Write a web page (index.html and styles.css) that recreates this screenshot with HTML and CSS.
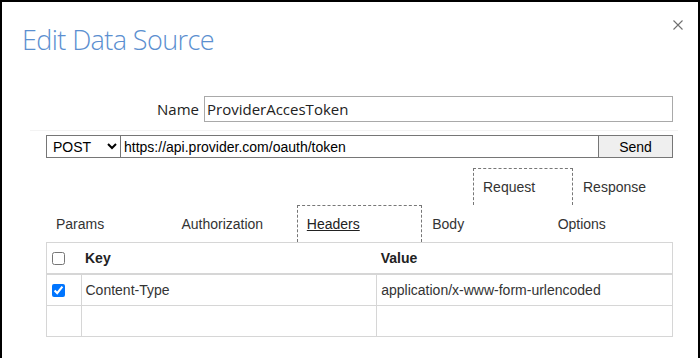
FILE: index.html
```html
<!DOCTYPE html>
<html lang="en">
<head>
    <meta charset="UTF-8">
    <title>Edit Data Source</title>
    <link rel="stylesheet" href="styles.css">
</head>
<body>
    <div class="dialog">
        <div class="dialog-head">
            <h1>Edit Data Source</h1>
            <button class="close" title="Close">
                <svg width="10" height="10" viewBox="0 0 10 10"><path d="M0.5 0.5 L9.5 9.5 M9.5 0.5 L0.5 9.5" stroke="#6f6f6f" stroke-width="1.1" fill="none"/></svg>
            </button>
        </div>
        <div class="content">
            <div class="name-row">
                <label for="name">Name</label>
                <input id="name" type="text" value="ProviderAccesToken">
            </div>
            <div class="sep"></div>
            <div class="request-row">
                <select class="method">
                    <option>POST</option>
                    <option>GET</option>
                    <option>PUT</option>
                    <option>DELETE</option>
                </select>
                <input class="url" type="text" value="https://api.provider.com/oauth/token">
                <button class="send">Send</button>
            </div>
            <div class="tabs tabs-top">
                <div class="tab active">Request</div>
                <div class="tab">Response</div>
            </div>
            <div class="tabs tabs-main">
                <div class="tab">Params</div>
                <div class="tab">Authorization</div>
                <div class="tab active"><u>Headers</u></div>
                <div class="tab">Body</div>
                <div class="tab">Options</div>
            </div>
            <table class="grid">
                <thead>
                    <tr>
                        <th class="check"><input type="checkbox"></th>
                        <th>Key</th>
                        <th>Value</th>
                    </tr>
                </thead>
                <tbody>
                    <tr>
                        <td class="check"><input type="checkbox" checked></td>
                        <td>Content-Type</td>
                        <td>application/x-www-form-urlencoded</td>
                    </tr>
                    <tr>
                        <td class="check"></td>
                        <td></td>
                        <td></td>
                    </tr>
                </tbody>
            </table>
        </div>
    </div>
</body>
</html>
```

FILE: styles.css
```css
body {
    margin: 0;
    font-family: "Liberation Sans", Arial, sans-serif;
    font-size: 14px;
    color: #333;
    background: #fff;
}
.dialog {
    box-sizing: border-box;
    height: 358px;
    border: 2px solid #000;
    border-bottom: none;
    background: #fff;
    overflow: hidden;
}
.dialog-head {
    display: flex;
    justify-content: space-between;
    align-items: flex-start;
    padding: 18px 15px 0 20px;
}
.dialog-head h1 {
    margin: 1px 0 0;
    font-family: "Open Sans", sans-serif;
    font-weight: 300;
    font-size: 27px;
    letter-spacing: -0.6px;
    line-height: 38px;
    color: #5b8fd0;
}
.close {
    border: none;
    background: none;
    padding: 0;
    width: 10px;
    height: 10px;
    cursor: pointer;
}
.close svg {
    display: block;
}
.content {
    padding: 0 25px 0 44px;
}
.name-row {
    display: flex;
    align-items: center;
    margin-top: 37px;
}
.name-row label {
    flex: 1;
    text-align: right;
    padding-right: 5px;
    font-family: "Open Sans", sans-serif;
    font-size: 15px;
    color: #222;
}
.name-row input {
    box-sizing: border-box;
    width: 469px;
    height: 26px;
    border: 1px solid #a9a9a9;
    padding: 0 2px;
    font-family: "Open Sans", sans-serif;
    font-size: 15px;
    color: #222;
    outline: none;
}
.sep {
    margin: 8px -5px 0 -16px;
    border-top: 1px solid #f3f3f3;
}
.request-row {
    display: flex;
    height: 23px;
    margin-top: 4px;
}
.request-row .method {
    box-sizing: border-box;
    width: 75px;
    height: 23px;
    border: 1px solid #767676;
    border-radius: 0;
    padding: 0 0 0 2px;
    font-family: "Liberation Sans", Arial, sans-serif;
    font-size: 14px;
    color: #000;
    background: #fff;
}
.request-row .url {
    box-sizing: border-box;
    flex: 1;
    height: 23px;
    margin-left: -1px;
    border: 1px solid #767676;
    padding: 0 3px;
    font-family: "Liberation Sans", Arial, sans-serif;
    font-size: 14px;
    color: #000;
    outline: none;
}
.request-row .send {
    box-sizing: border-box;
    width: 75px;
    height: 23px;
    margin-left: -1px;
    border: 1px solid #767676;
    border-radius: 0;
    background: #efefef;
    font-family: "Liberation Sans", Arial, sans-serif;
    font-size: 14px;
    color: #000;
}
.tabs {
    display: flex;
}
.tabs-top {
    justify-content: flex-end;
    margin-top: 10px;
}
.tab {
    box-sizing: border-box;
    height: 37px;
    border: 1px dashed transparent;
    border-bottom: none;
    padding-left: 9px;
    line-height: 36px;
    color: #333;
}
.tabs-top .tab {
    width: 100px;
}
.tabs-main .tab {
    flex: 1;
}
.tab.active {
    border-color: #777;
}
.tab u {
    color: #222;
}
.grid {
    width: 100%;
    border-collapse: collapse;
    border: 1px solid #d6d6d6;
    table-layout: fixed;
}
.grid th,
.grid td {
    height: 30px;
    padding: 0 4px;
    text-align: left;
    vertical-align: middle;
}
.grid th {
    font-weight: bold;
    color: #222;
    border-bottom: 2px solid #d6d6d6;
}
.grid td {
    border: 1px solid #d6d6d6;
}
.grid .check {
    width: 26px;
}
.grid input[type="checkbox"] {
    display: block;
    margin: 0 0 0 1px;
}
```
